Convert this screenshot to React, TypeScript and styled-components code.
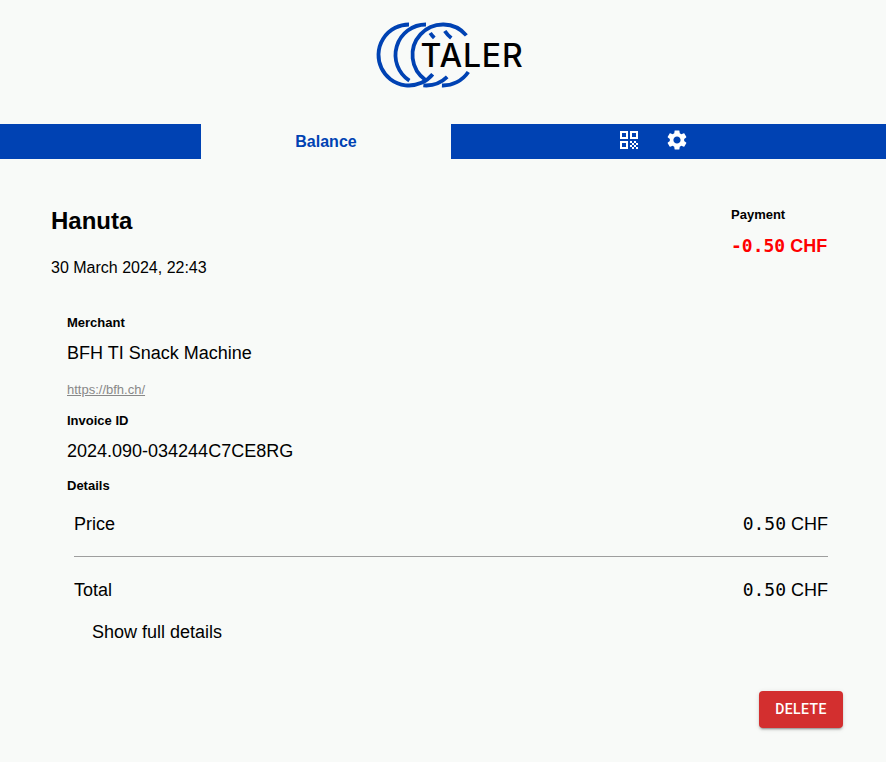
import React from "react";
import styled, { createGlobalStyle } from "styled-components";

const Global = createGlobalStyle`
  html, body { margin: 0; padding: 0; background: #f8faf8; }
  body { font-family: "Liberation Sans", Arial, sans-serif; color: #000; }
`;

const Page = styled.div`
  width: 886px;
  height: 762px;
  overflow: hidden;
  display: flex;
  flex-direction: column;
  background: #f8faf8;
`;
const Header = styled.header`
  height: 124px;
  display: flex;
  justify-content: center;
  padding: 20px 0 0 16px;
  box-sizing: border-box;
`;
const Nav = styled.nav`
  height: 35px;
  background: #0042b3;
  display: flex;
  padding-left: 201px;
  flex: none;
`;
const Tab = styled.a`
  width: 250px;
  background: #f8faf8;
  color: #0042b3;
  font-size: 16px;
  font-weight: 700;
  display: flex;
  align-items: center;
  justify-content: center;
`;
const NavIcons = styled.div`
  display: flex;
  align-items: center;
  padding: 0 0 3px 168px;
  gap: 26px;
  color: #fff;
`;
const Main = styled.main`
  padding: 48px 43px 0 51px;
  flex: 1;
  display: flex;
  flex-direction: column;
`;
const Top = styled.div`
  display: flex;
  justify-content: space-between;
  padding-right: 16px;
`;
const Title = styled.h1`
  font-size: 24px;
  font-weight: 700;
  line-height: 28px;
  margin: 0 0 23px;
`;
const DateText = styled.div`
  font-size: 16px;
  line-height: 20px;
`;
const PaymentBox = styled.div`
  width: 96px;
`;
const SmallLabel = styled.div`
  font-size: 13px;
  font-weight: 700;
  line-height: 15px;
`;
const Neg = styled.div`
  color: #f00;
  font-weight: 700;
  font-size: 18px;
  line-height: 22px;
  margin-top: 13px;
  white-space: nowrap;
`;
const Mono = styled.span`
  font-family: "DejaVu Sans Mono", monospace;
`;
const Section = styled.section`
  padding: 37px 15px 0 16px;
  display: flex;
  flex-direction: column;
`;
const Value = styled.div`
  font-size: 18px;
  line-height: 22px;
  margin-top: 12px;
`;
const Link = styled.a`
  display: block;
  color: #888;
  font-size: 13px;
  line-height: 15px;
  text-decoration: underline;
  margin-top: 18px;
`;
const Gapped = styled.div<{ $top: number }>`
  margin-top: ${(p) => p.$top}px;
`;
const Rows = styled.div`
  padding: 20px 0 0 7px;
`;
const Row = styled.div`
  display: flex;
  justify-content: space-between;
  font-size: 18px;
  line-height: 22px;
`;
const Rule = styled.hr`
  border: 0;
  border-top: 1px solid #9e9e9e;
  margin: 21px 0 22px;
`;
const ShowMore = styled.div`
  font-size: 18px;
  line-height: 22px;
  margin: 20px 0 0 25px;
`;
const Actions = styled.div`
  display: flex;
  justify-content: flex-end;
  margin-top: 48px;
`;
const Danger = styled.button`
  width: 84px;
  height: 37px;
  padding: 0 0 2px;
  border: 0;
  border-radius: 4px;
  background: #d32f2f;
  color: #fff;
  font-family: Roboto, sans-serif;
  font-size: 14px;
  font-weight: 500;
  letter-spacing: 0.4px;
  box-shadow: 0 3px 1px -2px rgba(0,0,0,.2), 0 2px 2px 0 rgba(0,0,0,.14), 0 1px 5px 0 rgba(0,0,0,.12);
`;

const R = 30.5;
const CY = 35;
// Arc on a logo ring, angles in degrees clockwise from +x, drawn with decreasing angle.
const arc = (cx: number, from: number, to: number) => {
  const p = (a: number) => {
    const t = (a * Math.PI) / 180;
    return `${(cx + R * Math.cos(t)).toFixed(2)} ${(CY + R * Math.sin(t)).toFixed(2)}`;
  };
  const large = Math.abs(to - from) > 180 ? 1 : 0;
  return `M${p(from)} A${R} ${R} 0 ${large} 0 ${p(to)}`;
};

const ringArcs = [
  arc(33, -90, -321),
  arc(33, -46, -34),
  arc(50, -90, -237),
  arc(50, 95, 46),
  arc(50, -52, -34),
  arc(67, -40, -235),
  arc(67, 92, 34),
];

const Logo = () => (
  <svg width="150" height="70" viewBox="0 0 150 70" fill="none">
    <g stroke="#0042b3" strokeWidth="3.8" fill="none">
      {ringArcs.map((d) => (
        <path key={d} d={d} />
      ))}
    </g>
    <text x="44.5" y="47" fontFamily="Inter, sans-serif" fontSize="32" fontWeight="500" fill="#000" letterSpacing="0.8">TALER</text>
  </svg>
);

const QrIcon = () => (
  <svg width="20" height="20" viewBox="0 0 20 20" fill="#fff">
    <path fillRule="evenodd" d="M1 1h8v8H1zM3 3v4h4V3zM11 1h8v8h-8zM13 3v4h4V3zM1 11h8v8H1zM3 13v4h4v-4z" />
    <path d="M11 11h2v2h-2zM15 11h2v2h-2zM13 13h2v2h-2zM17 13h2v2h-2zM11 15h2v2h-2zM15 15h2v2h-2zM13 17h2v2h-2zM17 17h2v2h-2z" />
  </svg>
);

const GearIcon = () => (
  <svg width="24" height="24" viewBox="0 0 24 24" fill="#fff">
    <path d="M19.14 12.94c.04-.3.06-.61.06-.94 0-.32-.02-.64-.07-.94l2.03-1.58c.18-.14.23-.41.12-.61l-1.92-3.32c-.12-.22-.37-.29-.59-.22l-2.39.96c-.5-.38-1.03-.7-1.62-.94l-.36-2.54c-.04-.24-.24-.41-.48-.41h-3.84c-.24 0-.43.17-.47.41l-.36 2.54c-.59.24-1.13.57-1.62.94l-2.39-.96c-.22-.08-.47 0-.59.22L2.74 8.87c-.12.21-.08.47.12.61l2.03 1.58c-.05.3-.09.63-.09.94s.02.64.07.94l-2.03 1.58c-.18.14-.23.41-.12.61l1.92 3.32c.12.22.37.29.59.22l2.39-.96c.5.38 1.03.7 1.62.94l.36 2.54c.05.24.24.41.48.41h3.84c.24 0 .44-.17.47-.41l.36-2.54c.59-.24 1.13-.56 1.62-.94l2.39.96c.22.08.47 0 .59-.22l1.92-3.32c.12-.22.07-.47-.12-.61l-2.01-1.58zM12 15.6c-1.98 0-3.6-1.62-3.6-3.6s1.62-3.6 3.6-3.6 3.6 1.62 3.6 3.6-1.62 3.6-3.6 3.6z" />
  </svg>
);

export default function App() {
  return (
    <Page>
      <Global />
      <Header><Logo /></Header>
      <Nav>
        <Tab>Balance</Tab>
        <NavIcons><QrIcon /><GearIcon /></NavIcons>
      </Nav>
      <Main>
        <Top>
          <div>
            <Title>Hanuta</Title>
            <DateText>30 March 2024, 22:43</DateText>
          </div>
          <PaymentBox>
            <SmallLabel>Payment</SmallLabel>
            <Neg><Mono>-0.50</Mono> CHF</Neg>
          </PaymentBox>
        </Top>
        <Section>
          <SmallLabel>Merchant</SmallLabel>
          <Value>BFH TI Snack Machine</Value>
          <Link>https://bfh.ch/</Link>
          <Gapped $top={16}><SmallLabel>Invoice ID</SmallLabel></Gapped>
          <Value>2024.090-034244C7CE8RG</Value>
          <Gapped $top={16}><SmallLabel>Details</SmallLabel></Gapped>
          <Rows>
            <Row><span>Price</span><span><Mono>0.50</Mono> CHF</span></Row>
            <Rule />
            <Row><span>Total</span><span><Mono>0.50</Mono> CHF</span></Row>
          </Rows>
          <ShowMore>Show full details</ShowMore>
        </Section>
        <Actions><Danger>DELETE</Danger></Actions>
      </Main>
    </Page>
  );
}
